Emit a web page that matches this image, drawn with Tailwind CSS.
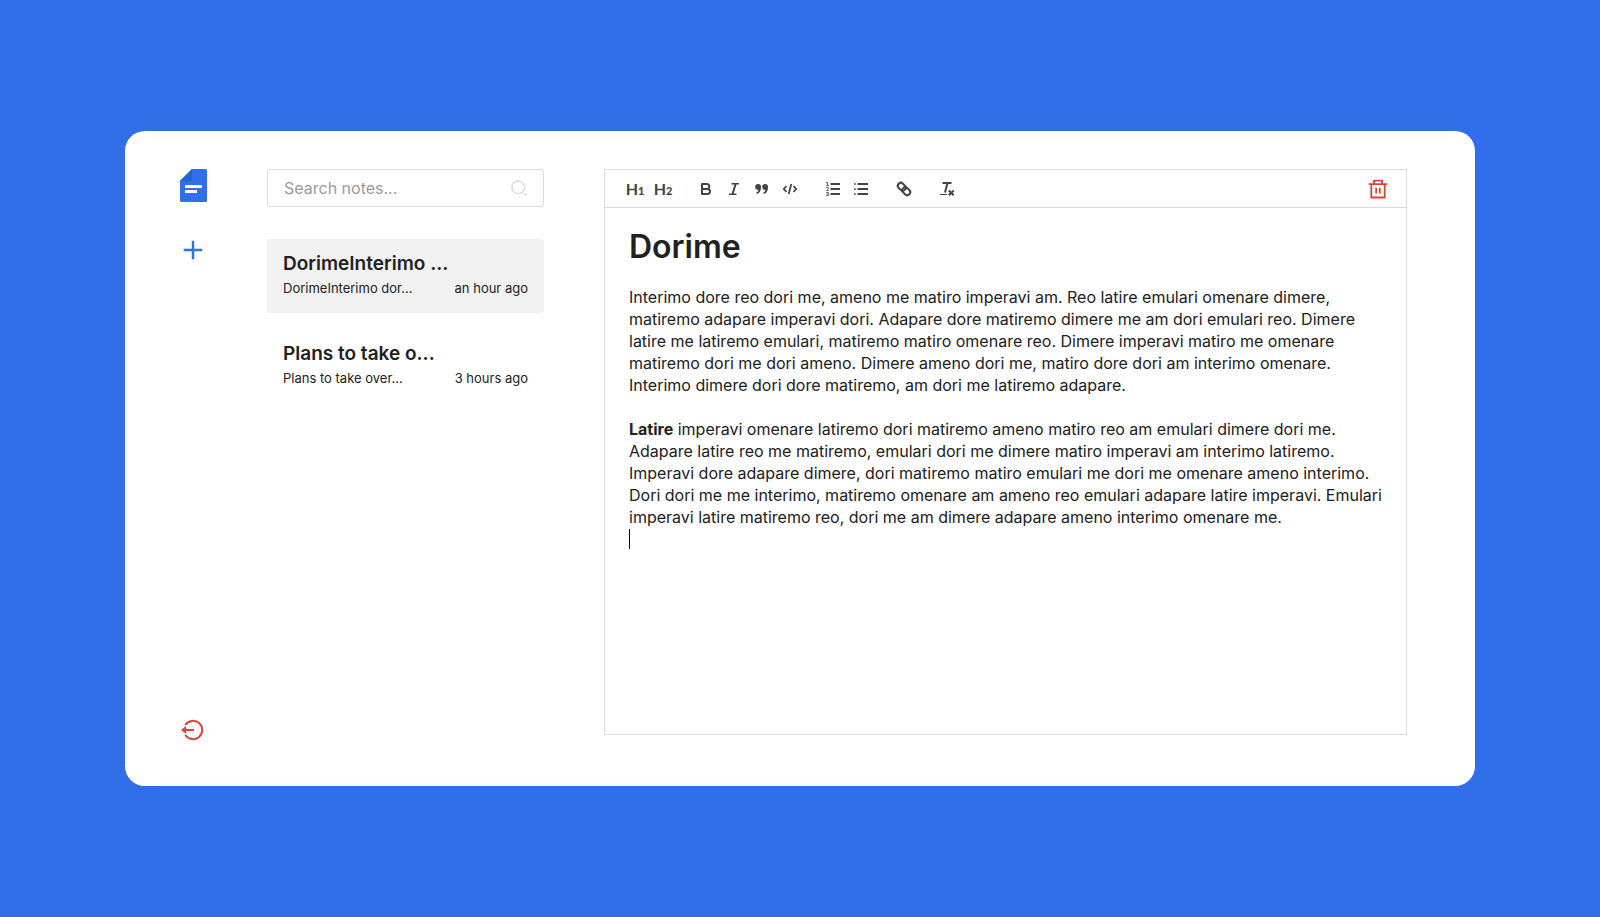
<!DOCTYPE html>
<html lang="en">
<head>
<meta charset="utf-8">
<meta name="viewport" content="width=device-width, initial-scale=1">
<title>Notes</title>
<script src="https://cdn.jsdelivr.net/npm/@tailwindcss/browser@4"></script>
</head>
<body class="flex min-h-screen items-center justify-center bg-[#316eea] px-[125px] font-['Inter',sans-serif] text-[#212121]">
<div class="flex min-h-[655px] w-full max-w-[1350px] rounded-[20px] bg-white pt-[38px] pr-[68px] pb-[42px] pl-[55px]">

  <nav aria-label="Main" class="flex w-[27px] shrink-0 flex-col items-start">
    <a href="#" aria-label="Notes home" class="block">
      <svg class="block" width="27" height="33" viewBox="0 0 27 33"><path d="M12 0H25.500Q27 0 27 1.500V31.500Q27 33 25.500 33H1.500Q0 33 0 31.500V12Z" fill="#316eea"/><path d="M12 0V10.500Q12 12 10.500 12H0Z" fill="#2265cd"/><path d="M5 16H22V19H5ZM5 21H17V24H5Z" fill="#fff"/></svg>
    </a>
    <button type="button" aria-label="New note" class="mt-[35px] block">
      <svg class="block" width="26" height="26" viewBox="0 0 26 26" stroke="#316eea" stroke-width="2.400" fill="none"><path d="M13 3.700V22.300M3.700 13H22.300"/></svg>
    </button>
    <button type="button" aria-label="Log out" class="mt-auto block">
      <svg class="block" width="26" height="26" viewBox="0 0 26 26" fill="none" stroke="#db4437" stroke-width="2"><path d="M5.300 7A9.200 9.200 0 1 1 5.300 17"/><path d="M4 12H14"/><path d="M1 12L6 8V16Z" fill="#db4437" stroke="none"/></svg>
    </button>
  </nav>

  <section aria-label="Notes list" class="ml-[60px] w-[277px] shrink-0">
    <div class="flex h-[38px] items-center rounded-[3px] border border-[#dcdcdc] px-4">
      <input type="text" aria-label="Search notes" placeholder="Search notes..." class="min-w-0 flex-1 text-base outline-none placeholder:text-[#9a9a9a]">
      <svg class="block shrink-0" width="16" height="16" viewBox="0 0 16 16" fill="none" stroke="#dcdcdc" stroke-width="1.500"><circle cx="7.300" cy="7.300" r="6.400"/><path d="M13.300 13.300L15.300 15.300" stroke-width="1.700"/></svg>
    </div>
    <ul class="mt-8 flex flex-col gap-4">
      <li><button type="button" class="flex h-[74px] w-full flex-col rounded-[3px] bg-[#f1f1f1] px-4 pt-3 text-left">
        <span class="block text-[19px] leading-[26px] font-semibold">DorimeInterimo ...</span>
        <span class="flex w-full justify-between text-[13px] leading-[22px]"><span>DorimeInterimo dor...</span><span>an hour ago</span></span>
      </button></li>
      <li><button type="button" class="flex h-[74px] w-full flex-col rounded-[3px] px-4 pt-3 text-left">
        <span class="block text-[19px] leading-[26px] font-semibold">Plans to take o...</span>
        <span class="flex w-full justify-between text-[13px] leading-[22px]"><span>Plans to take over...</span><span>3 hours ago</span></span>
      </button></li>
    </ul>
  </section>

  <main class="mb-[9px] ml-[60px] flex min-w-0 flex-1 flex-col border border-[#dcdcdc]">
    <div role="toolbar" aria-label="Formatting" class="flex h-[38px] shrink-0 items-center gap-[15px] border-b border-[#dcdcdc] pr-4 pl-4 text-[#444]">
      <div class="flex">
        <button type="button" aria-label="Heading 1" class="flex h-7 w-7 items-baseline justify-center font-['Lato',sans-serif] text-[16px] leading-7 font-bold">H<span class="text-[11px] font-black">1</span></button>
        <button type="button" aria-label="Heading 2" class="flex h-7 w-7 items-baseline justify-center font-['Lato',sans-serif] text-[16px] leading-7 font-bold">H<span class="text-[11px] font-black">2</span></button>
      </div>
      <div class="flex">
        <button type="button" aria-label="Bold" class="grid h-7 w-7 place-items-center"><svg width="18" height="18" viewBox="0 0 18 18" fill="none" stroke="#444" stroke-width="2" stroke-linejoin="round"><path d="M5 4H9.800A2.500 2.500 0 0 1 9.800 9H5ZM5 9H10.500A2.500 2.500 0 0 1 10.500 14H5Z"/></svg></button>
        <button type="button" aria-label="Italic" class="grid h-7 w-7 place-items-center"><svg width="18" height="18" viewBox="0 0 18 18" fill="none" stroke="#444"><path d="M6.500 3.800H14M4 14.200H11.500" stroke-width="1.500"/><path d="M10.600 4L7.600 14" stroke-width="2"/></svg></button>
        <button type="button" aria-label="Quote" class="grid h-7 w-7 place-items-center"><svg width="18" height="18" viewBox="0 0 18 18" fill="#444"><path d="M8 7C8 11 6.500 13.500 3.600 14L3.300 12.600C4.700 12.100 5.300 11.200 5.300 9.800A2.900 2.900 0 1 1 8 7ZM15 7C15 11 13.500 13.500 10.600 14L10.300 12.600C11.700 12.100 12.300 11.200 12.300 9.800A2.900 2.900 0 1 1 15 7Z"/></svg></button>
        <button type="button" aria-label="Code" class="grid h-7 w-7 place-items-center"><svg width="18" height="18" viewBox="0 0 18 18" fill="none" stroke="#444" stroke-width="1.800"><path d="M5.500 6L2.800 9L5.500 12M12.500 6L15.200 9L12.500 12M10.300 4L7.700 14"/></svg></button>
      </div>
      <div class="flex">
        <button type="button" aria-label="Numbered list" class="grid h-7 w-7 place-items-center"><svg width="18" height="18" viewBox="0 0 18 18" fill="none" stroke="#444"><path d="M6.500 4H16M6.500 9H16M6.500 14H16" stroke-width="2"/><path d="M2 2.700L3.500 2.200V5.500M2 5.700H5M2.200 7.500H4.300V9L2.500 10.500H4.700M2.200 12.500H4.300V15.500H2.200M2.500 14H4.300" stroke-width=".8"/></svg></button>
        <button type="button" aria-label="Bulleted list" class="grid h-7 w-7 place-items-center"><svg width="18" height="18" viewBox="0 0 18 18" fill="none" stroke="#444"><path d="M5.500 4H16M5.500 9H16M5.500 14H16" stroke-width="2"/><path d="M2 4H3.700M2 9H3.700M2 14H3.700" stroke-width="1.500"/></svg></button>
      </div>
      <div class="flex">
        <button type="button" aria-label="Link" class="grid h-7 w-7 place-items-center"><svg width="18" height="18" viewBox="0 0 18 18" fill="none" stroke="#444" stroke-width="2"><g transform="rotate(45 9 9)"><rect x="1.500" y="6" width="8.700" height="6" rx="3"/><rect x="7.800" y="6" width="8.700" height="6" rx="3"/></g></svg></button>
      </div>
      <div class="flex">
        <button type="button" aria-label="Clear formatting" class="grid h-7 w-7 place-items-center"><svg width="18" height="18" viewBox="0 0 18 18" fill="none" stroke="#444"><path d="M4.500 3H13.500M9.500 3L7 12.500" stroke-width="2"/><path d="M2 14.500H9" stroke-width="1"/><path d="M10.800 10.500L15.700 15.300M15.700 10.500L10.800 15.300" stroke-width="2"/></svg></button>
      </div>
      <button type="button" aria-label="Delete note" class="ml-auto grid h-6 w-6 place-items-center"><svg width="20" height="20" viewBox="0 0 20 20" fill="none" stroke="#db4437" stroke-width="1.800"><path d="M.7 5.200H19.300M3.300 5.200V18.500H16.700V5.200M6 5V1.700H14V5M8.200 8.700V14.500M11.800 8.700V14.500"/></svg></button>
    </div>
    <article class="flex-1 px-6 pt-[19px] text-base leading-[22px]">
      <h1 class="text-[32px] leading-10 font-semibold">Dorime</h1>
      <p class="mt-[19px]">Interimo dore reo dori me, ameno me matiro imperavi am. Reo latire emulari omenare dimere, matiremo adapare imperavi dori. Adapare dore matiremo dimere me am dori emulari reo. Dimere latire me latiremo emulari, matiremo matiro omenare reo. Dimere imperavi matiro me omenare matiremo dori me dori ameno. Dimere ameno dori me, matiro dore dori am interimo omenare. Interimo dimere dori dore matiremo, am dori me latiremo adapare.</p>
      <p class="mt-[22px]"><strong class="font-bold">Latire</strong> imperavi omenare latiremo dori matiremo ameno matiro reo am emulari dimere dori me. Adapare latire reo me matiremo, emulari dori me dimere matiro imperavi am interimo latiremo. Imperavi dore adapare dimere, dori matiremo matiro emulari me dori me omenare ameno interimo. Dori dori me me interimo, matiremo omenare am ameno reo emulari adapare latire imperavi. Emulari imperavi latire matiremo reo, dori me am dimere adapare ameno interimo omenare me.</p>
      <div aria-hidden="true" class="mt-px h-5 w-px bg-black"></div>
    </article>
  </main>
</div>
</body>
</html>
